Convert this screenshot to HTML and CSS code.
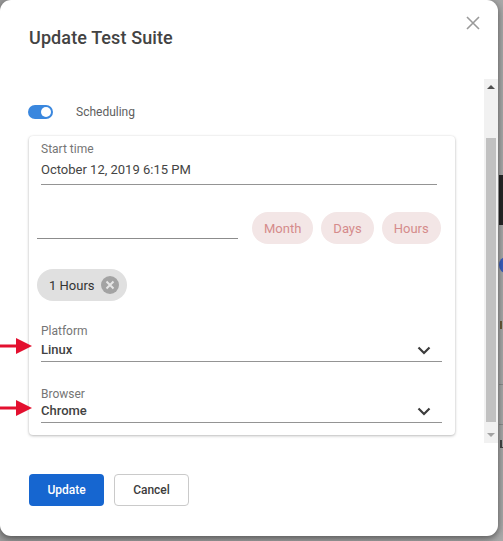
FILE: index.html
```html
<!DOCTYPE html>
<html>
<head>
<meta charset="utf-8">
<link rel="stylesheet" href="styles.css">
</head>
<body>
<div class="behind">
  <div class="bh-dark"></div>
  <div class="bh-dot"></div>
  <div class="bh-mark bh-m1"></div>
  <div class="bh-line bh-l1"></div>
  <div class="bh-line bh-l2"></div>
  <div class="bh-mark bh-m2"></div>
</div>
<div class="dialog">
  <header class="dlg-head">
    <h2 class="dlg-title">Update Test Suite</h2>
    <span class="close">
      <svg width="14" height="14" viewBox="0 0 14 14"><path d="M1 1L13 13M13 1L1 13" stroke="#9a9a9a" stroke-width="1.6" fill="none"/></svg>
    </span>
  </header>
  <div class="dlg-body">
    <div class="content">
      <div class="toggle-row">
        <span class="toggle"><span class="knob"></span></span>
        <span class="toggle-label">Scheduling</span>
      </div>
      <div class="card">
        <div class="field start">
          <div class="label">Start time</div>
          <div class="value">October 12, 2019 6:15 PM</div>
        </div>
        <div class="unit-row">
          <div class="blank-input"></div>
          <span class="chip unit">Month</span>
          <span class="chip unit">Days</span>
          <span class="chip unit">Hours</span>
        </div>
        <div class="chip-row">
          <span class="chip sel">1 Hours<span class="chip-x"><svg width="18" height="18" viewBox="0 0 18 18"><circle cx="9" cy="9" r="9" fill="#a3a3a3"/><path d="M5.5 5.5L12.5 12.5M12.5 5.5L5.5 12.5" stroke="#e6e6e6" stroke-width="2" fill="none"/></svg></span></span>
        </div>
        <div class="field select platform">
          <div class="label">Platform</div>
          <div class="value">Linux<svg class="chev" width="14" height="9" viewBox="0 0 14 9"><path d="M1.5 1.5L7 7L12.5 1.5" stroke="#3c3c3c" stroke-width="2.2" fill="none"/></svg></div>
          <span class="arrow"><svg width="32" height="16" viewBox="0 0 32 16"><rect x="0" y="6.5" width="18" height="3" fill="#e3102f"/><path d="M16 0L32 8L16 16Z" fill="#e3102f"/></svg></span>
        </div>
        <div class="field select browser">
          <div class="label">Browser</div>
          <div class="value">Chrome<svg class="chev" width="14" height="9" viewBox="0 0 14 9"><path d="M1.5 1.5L7 7L12.5 1.5" stroke="#3c3c3c" stroke-width="2.2" fill="none"/></svg></div>
          <span class="arrow"><svg width="32" height="16" viewBox="0 0 32 16"><rect x="0" y="6.5" width="18" height="3" fill="#e3102f"/><path d="M16 0L32 8L16 16Z" fill="#e3102f"/></svg></span>
        </div>
      </div>
    </div>
    <div class="scrollbar">
      <span class="sb-up"></span>
      <span class="sb-track"><span class="sb-thumb"></span></span>
      <span class="sb-down"></span>
    </div>
  </div>
  <footer class="dlg-foot">
    <button class="btn primary">Update</button>
    <button class="btn secondary">Cancel</button>
  </footer>
</div>
</body>
</html>
```
FILE: styles.css
```css
* { box-sizing: border-box; }
html, body { margin: 0; padding: 0; }
body {
  width: 503px;
  height: 541px;
  overflow: hidden;
  background: linear-gradient(to right, #9c9c9c 0%, #a9a9a9 100%);
  font-family: Roboto, "Liberation Sans", sans-serif;
  position: relative;
}
.behind { position: absolute; left: 0; top: 0; width: 503px; height: 541px; }
.bh-dark { position: absolute; left: 499px; top: 175px; width: 10px; height: 50px; background: #262626; }
.bh-dot { position: absolute; left: 499px; top: 257px; width: 14px; height: 16px; border-radius: 50%; background: #3b5fbf; }
.bh-mark { position: absolute; left: 500px; width: 3px; height: 8px; border-left: 2px solid #6a5a3a; }
.bh-m1 { top: 321px; }
.bh-m2 { top: 440px; border-left-color: #444; border-bottom: 1px solid #444; }
.bh-line { position: absolute; left: 499px; width: 10px; height: 1px; background: #8c8c8c; }
.bh-l1 { top: 384px; }
.bh-l2 { top: 424px; }

.dialog {
  position: relative;
  width: 498px;
  height: 536px;
  background: #fff;
  border-radius: 11px;
  box-shadow: 0 3px 6px rgba(0,0,0,0.35), 0 0 10px rgba(0,0,0,0.2);
  display: flex;
  flex-direction: column;
  overflow: hidden;
}
.dlg-head {
  height: 79px;
  display: flex;
  justify-content: space-between;
  align-items: flex-start;
  padding: 25px 18px 0 29px;
}
.dlg-title {
  margin: 0;
  font-size: 18px;
  line-height: 26px;
  font-weight: 500;
  color: #434343;
  letter-spacing: 0.1px;
}
.close { display: block; margin-top: -9px; width: 14px; height: 14px; }
.close svg { display: block; }

.dlg-body {
  height: 364px;
  display: flex;
}
.content {
  flex: 1;
  padding: 24px 0 0 28px;
}
.toggle-row {
  display: flex;
  align-items: center;
  height: 18px;
}
.toggle {
  width: 25px;
  height: 14px;
  border-radius: 7px;
  background: #3a87de;
  position: relative;
  display: block;
}
.knob {
  position: absolute;
  right: 2px;
  top: 2px;
  width: 10px;
  height: 10px;
  border-radius: 50%;
  background: #fff;
}
.toggle-label {
  margin-left: 23px;
  font-size: 12px;
  color: #5e5e5e;
}

.card {
  margin-top: 15px;
  margin-left: 1px;
  width: 426px;
  height: 299px;
  background: #fff;
  border-radius: 4px;
  box-shadow: 0 1px 3px rgba(0,0,0,0.25), 0 0 2px rgba(0,0,0,0.08);
  padding: 6px 0 0 0;
}
.field { position: relative; }
.label {
  font-size: 12px;
  line-height: 14px;
  color: #757575;
}
.start { margin: 0 18px 0 12px; border-bottom: 1px solid #949494; }
.start .value {
  font-size: 13px;
  line-height: 20px;
  color: #444;
  padding: 4px 0 4px;
}
.unit-row {
  display: flex;
  align-items: flex-end;
  margin: 27px 0 0 8px;
  height: 32px;
}
.blank-input {
  width: 201px;
  height: 1px;
  background: #8c8c8c;
  margin-bottom: 5px;
  margin-right: 14px;
}
.chip {
  display: inline-flex;
  align-items: center;
  height: 32px;
  border-radius: 16px;
  font-size: 13px;
  white-space: nowrap;
}
.unit {
  background: #f3e6e6;
  color: #d58b8b;
  padding: 0 12px;
  margin-right: 8px;
}
.chip-row {
  margin: 25px 0 0 8px;
  height: 32px;
}
.sel {
  background: #e0e0e0;
  color: #333;
  padding: 0 8px 0 12px;
}
.chip-x { display: block; margin-left: 6px; height: 18px; }
.chip-x svg { display: block; }

.select { margin: 0 13px 0 12px; border-bottom: 1px solid #949494; }
.platform { margin-top: 23px; }
.browser { margin-top: 25px; }
.select .value {
  font-size: 13px;
  font-weight: 500;
  line-height: 18px;
  color: #424242;
  padding: 3px 0 2px;
  display: flex;
  justify-content: space-between;
  align-items: center;
}
.browser .value { padding-top: 1px; }
.chev { margin-right: 11px; }
.arrow {
  position: absolute;
  left: -41px;
  top: 14px;
  display: block;
  height: 16px;
}
.browser .arrow { top: 13px; }
.arrow svg { display: block; }

.scrollbar {
  width: 14px;
  background: #f1f1f1;
  display: flex;
  flex-direction: column;
  align-items: center;
}
.sb-up {
  display: block;
  width: 0; height: 0;
  margin-top: 6px;
  border-left: 4px solid transparent;
  border-right: 4px solid transparent;
  border-bottom: 4px solid #505050;
}
.sb-track { flex: 1; width: 100%; padding: 49px 2px 11px; display: block; }
.sb-thumb { display: block; width: 100%; height: 100%; background: #c1c1c1; }
.sb-down {
  display: block;
  width: 0; height: 0;
  margin-bottom: 6px;
  border-left: 4px solid transparent;
  border-right: 4px solid transparent;
  border-top: 4px solid #a3a3a3;
}

.dlg-foot {
  padding: 31px 0 0 29px;
  display: flex;
  gap: 10px;
}
.btn {
  width: 75px;
  height: 32px;
  border-radius: 4px;
  font-family: Roboto, "Liberation Sans", sans-serif;
  font-size: 12px;
  font-weight: 500;
  cursor: pointer;
}
.primary { background: #1666d0; color: #fff; border: none; }
.secondary { background: #fff; color: #3c3c3c; border: 1px solid #cacaca; }
```
